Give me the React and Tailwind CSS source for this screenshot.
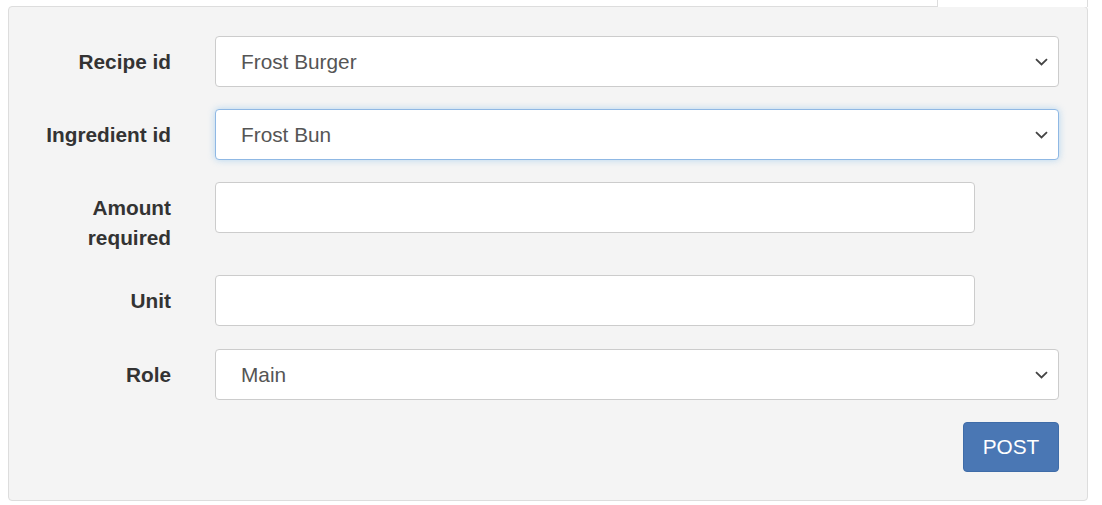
import React from "react";

const font = { fontFamily: '"Liberation Sans", Arial, sans-serif' };

function Chevron() {
  return (
    <svg
      width="13"
      height="8"
      viewBox="0 0 13 8"
      className="pointer-events-none absolute right-[10px] top-1/2 -translate-y-1/2"
    >
      <path d="M1 1.2 L6.5 6.5 L12 1.2" fill="none" stroke="#444" strokeWidth="1.8" />
    </svg>
  );
}

function Field({ label, className = "", children }) {
  return (
    <div className={"flex items-start gap-[44px] " + className}>
      <label className="w-[162px] shrink-0 pt-[11px] text-right text-[20.8px] font-bold leading-[30px] text-[#333]">
        {label}
      </label>
      {children}
    </div>
  );
}

function SelectBox({ value, focused }) {
  return (
    <div
      className={
        focused
          ? "relative flex h-[51px] w-[844px] items-center rounded-[4px] border border-[#8fb8e4] bg-white pl-[25px] shadow-[0_0_7px_rgba(102,175,233,0.45)]"
          : "relative flex h-[51px] w-[844px] items-center rounded-[4px] border border-[#cccccc] bg-white pl-[25px]"
      }
    >
      <span className="text-[20.8px] text-[#555]">{value}</span>
      <Chevron />
    </div>
  );
}

function TextBox() {
  return <div className="h-[51px] w-[760px] rounded-[4px] border border-[#cccccc] bg-white" />;
}

export default function App() {
  return (
    <div className="min-h-[505px] bg-white px-[8px] pt-[6px]" style={font}>
      <div className="relative w-[1080px] rounded-[4px] border border-[#dddddd] bg-[#f4f4f4] pb-[28px] pt-[29px]">
        {/* active tab piece sitting over the panel top */}
        <div className="absolute right-[-1px] top-[-7px] h-[7px] w-[151px] border-x border-[#dddddd] bg-white" />

        <div className="flex flex-col gap-[22px]">
          <Field label="Recipe id">
            <SelectBox value="Frost Burger" />
          </Field>
          <Field label="Ingredient id">
            <SelectBox value="Frost Bun" focused />
          </Field>
          <Field label={<>Amount<br />required</>}>
            <TextBox />
          </Field>
          <Field label="Unit">
            <TextBox />
          </Field>
          <Field label="Role" className="mt-[1px]">
            <SelectBox value="Main" />
          </Field>
          <div className="flex justify-end pr-[28px]">
            <button className="h-[50px] w-[96px] rounded-[4px] border border-[#3f6ca8] bg-[#4a77b4] text-[20.8px] text-white">
              POST
            </button>
          </div>
        </div>
      </div>
    </div>
  );
}
